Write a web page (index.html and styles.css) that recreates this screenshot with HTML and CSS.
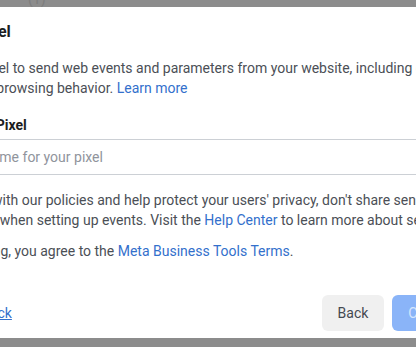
FILE: index.html
```html
<!DOCTYPE html>
<html lang="en">
<head>
<meta charset="utf-8">
<title>Create Pixel</title>
<link rel="stylesheet" href="styles.css">
</head>
<body>
<div class="backdrop">
  <div class="peek"><span class="peek-text">(1)</span></div>
  <div class="modal">
    <h2 class="title">Create Pixel</h2>
    <p class="desc">Create a Pixel to send web events and parameters from your website, including on-site<br>customers' browsing behavior. <a class="link" href="#">Learn more</a></p>
    <label class="label" for="pixel-name">Name your Pixel</label>
    <input class="input" id="pixel-name" type="text" placeholder="Enter a name for your pixel">
    <p class="note">To comply with our policies and help protect your users' privacy, don't share sensitive<br>information when setting up events. Visit the <a class="link" href="#">Help Center</a> to learn more about sensitive information.</p>
    <p class="terms">By continuing, you agree to the <a class="link" href="#">Meta Business Tools Terms</a>.</p>
    <div class="footer">
      <a class="feedback" href="#">Give feedback</a>
      <div class="actions">
        <button class="btn btn-back" type="button">Back</button>
        <button class="btn btn-continue" type="button" disabled>Continue</button>
      </div>
    </div>
  </div>
</div>
</body>
</html>
```
FILE: styles.css
```css
* { box-sizing: border-box; }
html, body {
  margin: 0;
  padding: 0;
  overflow: hidden;
  width: 416px;
  height: 347px;
}
body {
  background: #8c8c8c;
  font-family: Roboto, "Noto Sans", sans-serif;
  font-size: 14px;
  color: #4b4f56;
}
.backdrop {
  display: flex;
  flex-direction: column;
}
.peek {
  height: 7px;
  overflow: hidden;
  padding-left: 28px;
}
.peek-text {
  display: block;
  margin-top: -9px;
  font-size: 14px;
  line-height: 16px;
  color: #7d7d7d;
}
.modal {
  margin-left: -100px;
  width: 604px;
  height: 331px;
  background: #ffffff;
  padding: 15px 24px 0 24px;
  overflow: hidden;
  display: flex;
  flex-direction: column;
}
.title {
  margin: 0;
  font-size: 16px;
  line-height: 20px;
  font-weight: 700;
  color: #1c1e21;
  white-space: nowrap;
}
.desc, .note, .terms {
  margin: 0;
  line-height: 20px;
  white-space: nowrap;
}
.desc { margin-top: 16px; }
.label {
  display: block;
  margin-top: 17px;
  font-weight: 700;
  line-height: 20px;
  color: #1c1e21;
  white-space: nowrap;
}
.input {
  margin-top: 4px;
  height: 36px;
  width: 100%;
  border: 1px solid #ccd0d5;
  border-radius: 4px;
  padding: 0 12px;
  font-family: inherit;
  font-size: 14px;
  color: #1c1e21;
  background: #fff;
  outline: none;
}
.input::placeholder { color: #90949c; }
.note { margin-top: 15px; }
.terms { margin-top: 11px; }
.link {
  color: #3370cc;
  text-decoration: none;
}
.footer {
  margin-top: 34px;
  display: flex;
  justify-content: space-between;
  align-items: center;
}
.feedback {
  color: #3370cc;
  text-decoration: underline;
  line-height: 20px;
}
.actions {
  display: flex;
  gap: 8px;
}
.btn {
  height: 36px;
  padding: 0 16px;
  border: none;
  border-radius: 6px;
  font-family: inherit;
  font-size: 14px;
  line-height: 36px;
}
.btn-back {
  background: #f0f0f0;
  color: #444950;
}
.btn-continue {
  background: #8ab4f8;
  color: #d6e6fd;
}
```
